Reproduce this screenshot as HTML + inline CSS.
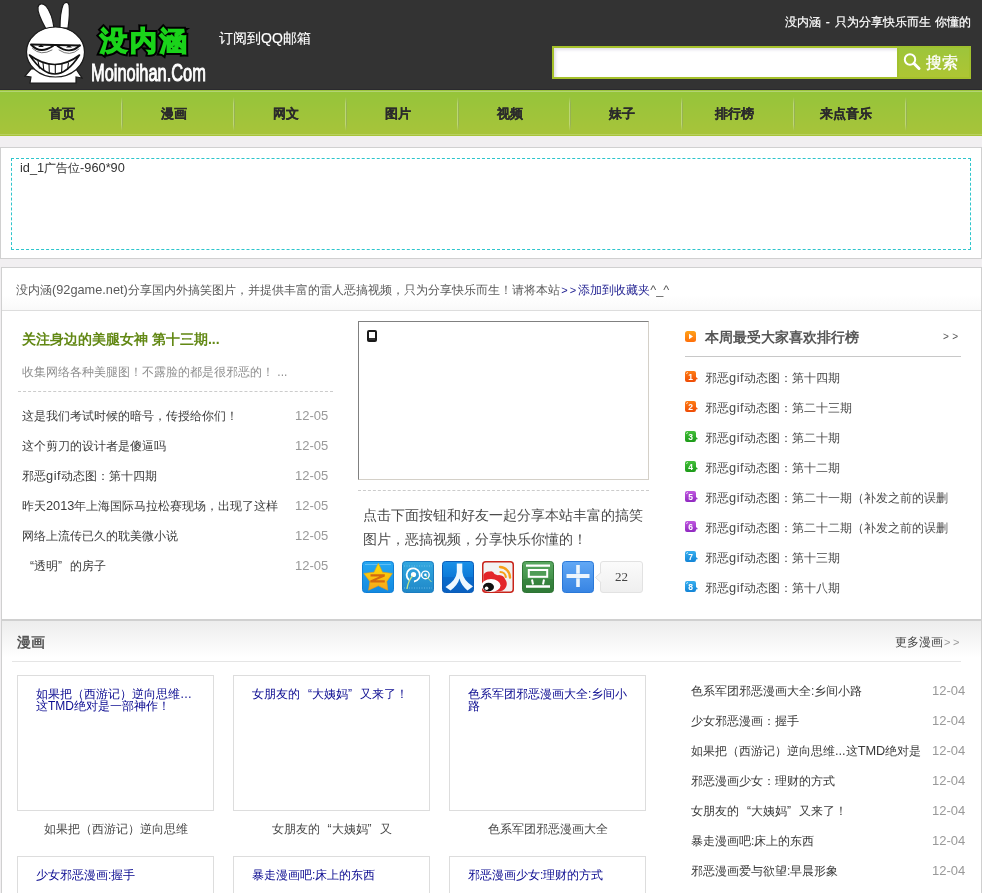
<!DOCTYPE html>
<html><head><meta charset="utf-8"><style>
*{margin:0;padding:0;box-sizing:border-box}
html,body{width:982px;height:893px;overflow:hidden;background:#f1eff1;font-family:"Liberation Sans",sans-serif;font-size:12px;color:#555}
.a{position:absolute;white-space:nowrap}
.lq{display:inline-block;width:12px;text-align:right}
.rq{display:inline-block;width:12px;text-align:left}
#top{position:absolute;left:0;top:0;width:982px;height:90px;background:#333;border-bottom:1px solid #2a292e}
#nav{position:absolute;left:0;top:90px;width:982px;height:46px;background:linear-gradient(#95c43a,#a8c43a);border-top:1px solid #9cc43f}
#nav:before{content:"";position:absolute;left:0;top:0;width:100%;height:1px;background:#b3d373}
#nav:after{content:"";position:absolute;left:0;bottom:1px;width:100%;height:1px;background:#b8d060}
.navi{position:absolute;top:15px;width:112px;text-align:center;font-weight:bold;font-size:13px;color:#2b2b2b;line-height:16px;-webkit-text-stroke:0.2px #2b2b2b}
.sep{position:absolute;top:6px;width:2px;height:34px;background:linear-gradient(rgba(255,255,255,0),rgba(255,255,255,.3) 20%,rgba(255,255,255,.3) 80%,rgba(255,255,255,0))}
.sep:after{content:"";position:absolute;left:1px;top:0;width:1px;height:100%;background:linear-gradient(rgba(80,110,20,0),rgba(80,110,20,.35) 20%,rgba(80,110,20,.35) 80%,rgba(80,110,20,0))}
.panel{position:absolute;background:#fff;border:1px solid #d0d0d0}
.clip{overflow:hidden}
</style></head><body><div style="position:absolute;left:0;top:0;width:982px;height:893px;overflow:hidden;will-change:transform">

<div id="top">
 <svg class="a" style="left:0;top:0" width="100" height="90" viewBox="0 0 100 90">
  <g stroke="#1a1a1a" stroke-width="1.2" fill="#fff">
   <path d="M46 29 C42 22 37 13 38 7 C39 3 43 3 46 6 C50 11 53 20 54 28 Z"/>
   <path d="M60 28 C60 20 61 10 63 5 C64 2 68 1 69 5 C70 12 69 21 68 28 Z"/>
   <path d="M31 69 L25 76 L31 77 L30 83 L76 83 L76 77 L82 78 L76 69 Z"/>
   <ellipse cx="55.5" cy="52" rx="29" ry="25"/>
  </g>
  <g fill="none" stroke="#111" stroke-width="1.9" stroke-linecap="round">
   <path d="M31 44.5 L80 45.5"/>
   <path d="M31.5 45 Q40 54.5 53 46"/>
   <path d="M57.5 46 Q70 55 79.5 45.5"/>
   <path d="M32.5 48.5 Q41 56.5 52 50" stroke="#666" stroke-width="0.9"/>
   <path d="M59 50 Q70 57.5 79 49" stroke="#666" stroke-width="0.9"/>
  </g>
  <path d="M41 44.5 L38 47 L44 47 Z M69 45 L66 47.5 L72 47.5 Z" fill="#111"/>
  <path d="M29.5 55 Q55 74 79.5 55 Q55 93 29.5 55 Z" fill="#fff" stroke="#111" stroke-width="1.6" stroke-linejoin="round"/>
  <g stroke="#111" stroke-width="1.1"><path d="M38 61 L39.5 68.5 M43 62.8 L43.8 70.5 M49 64 L49.3 72.5 M55.3 64.5 L55.3 74 M62 64 L61.6 72.5 M68.5 62.5 L67.5 70"/></g>
 </svg>
 <div class="a" style="left:100px;top:25px;font:bold 27px/32px 'Liberation Sans',sans-serif;color:#000;-webkit-text-stroke:5.5px #000;letter-spacing:3px">没内涵</div>
 <div class="a" style="left:100px;top:25px;font:bold 27px/32px 'Liberation Sans',sans-serif;color:#1ad31a;-webkit-text-stroke:1.6px #1ad31a;letter-spacing:3px">没内涵</div>
 <div class="a" style="left:91px;top:57px;font:22px/28px 'Liberation Sans',sans-serif;color:#fff;-webkit-text-stroke:0.9px #fff;transform:scale(0.745,1.12);transform-origin:0 0">Moinoihan.Com</div>
 <div class="a" style="left:219px;top:29px;font-size:14px;line-height:18px;color:#fff;-webkit-text-stroke:0.15px #fff">订阅到QQ邮箱</div>
 <div class="a" style="left:785px;top:13px;line-height:18px;color:#fff;word-spacing:1.5px;-webkit-text-stroke:0.2px #fff">没内涵 - 只为分享快乐而生 你懂的</div>
 <div class="a" style="left:552px;top:46px;width:345px;height:33px;border:2px solid #a6c12a;border-right:0;background:#fff;box-shadow:inset 2px 2px 3px #e2e0ea"></div>
 <div class="a" style="left:897px;top:46px;width:74px;height:33px;background:linear-gradient(#9cc53b,#afc533);box-shadow:inset 0 0 0 2px rgba(160,190,40,.6)">
  <svg class="a" style="left:0;top:0" width="74" height="33"><circle cx="13" cy="13.5" r="5.2" fill="none" stroke="#fff" stroke-width="2"/><path d="M17 17.5 L22 22.5" stroke="#fff" stroke-width="3" stroke-linecap="round"/></svg>
  <div class="a" style="left:29px;top:7px;font-size:16px;line-height:20px;color:#fff;-webkit-text-stroke:0.3px #fff">搜索</div>
 </div>
</div>
<div id="nav">
 <div class="navi" style="left:6px">首页</div>
 <div class="sep" style="left:121px"></div>
 <div class="navi" style="left:118px">漫画</div>
 <div class="sep" style="left:233px"></div>
 <div class="navi" style="left:230px">网文</div>
 <div class="sep" style="left:345px"></div>
 <div class="navi" style="left:342px">图片</div>
 <div class="sep" style="left:457px"></div>
 <div class="navi" style="left:454px">视频</div>
 <div class="sep" style="left:569px"></div>
 <div class="navi" style="left:566px">妹子</div>
 <div class="sep" style="left:681px"></div>
 <div class="navi" style="left:678px">排行榜</div>
 <div class="sep" style="left:793px"></div>
 <div class="navi" style="left:790px">来点音乐</div>
 <div class="sep" style="left:905px"></div>
</div>
<div class="panel" style="left:0;top:147px;width:982px;height:112px">
 <div class="a" style="left:10px;top:10px;width:960px;height:92px;border:1px dashed #2ec5cc"></div>
 <div class="a" style="left:19px;top:11px;line-height:18px;color:#333"><span style="font-size:12.75px">id_1</span>广告位<span style="font-size:12.75px">-960*90</span></div>
</div>
<div class="panel" style="left:1px;top:267px;width:981px;height:353px">
 <div class="a" style="left:0;top:0;width:979px;height:43px;background:linear-gradient(#fff 65%,#f9f9f9);border-bottom:1px solid #ddd"></div>
 <div class="a" style="left:14px;top:13px;line-height:18px;color:#5a5a5a">没内涵<span style="font-size:12.75px">(92game.net)</span>分享国内外搞笑图片，并提供丰富的雷人恶搞视频，只为分享快乐而生！请将本站<span style="color:#1d1d8f"><span style="font-size:11px;letter-spacing:2px;margin-left:1.5px">&gt;&gt;</span>添加到收藏夹</span><span style="font-size:12.75px">^_^</span></div>
 <div class="a" style="left:20px;top:62px;font-size:14px;font-weight:bold;line-height:18px;color:#628814">关注身边的美腿女神 第十三期...</div>
 <div class="a" style="left:20px;top:95px;line-height:18px;color:#8f8f8f">收集网络各种美腿图！不露脸的都是很邪恶的！ ...</div>
 <div class="a" style="left:16px;top:123px;width:315px;height:1px;border-top:1px dashed #ccc"></div>
 <div class="a clip" style="left:20px;top:133px;width:258px;line-height:30px;color:#3a3a3a">这是我们考试时候的暗号，传授给你们！</div><div class="a" style="left:293px;top:133px;line-height:30px;color:#999"><span style="font-size:13px">12-05</span></div>
 <div class="a clip" style="left:20px;top:163px;width:258px;line-height:30px;color:#3a3a3a">这个剪刀的设计者是傻逼吗</div><div class="a" style="left:293px;top:163px;line-height:30px;color:#999"><span style="font-size:13px">12-05</span></div>
 <div class="a clip" style="left:20px;top:193px;width:258px;line-height:30px;color:#3a3a3a">邪恶<span style="font-size:12.75px;letter-spacing:0.6px">gif</span>动态图：第十四期</div><div class="a" style="left:293px;top:193px;line-height:30px;color:#999"><span style="font-size:13px">12-05</span></div>
 <div class="a clip" style="left:20px;top:223px;width:258px;line-height:30px;color:#3a3a3a">昨天<span style="font-size:12.75px">2013</span>年上海国际马拉松赛现场，出现了这样</div><div class="a" style="left:293px;top:223px;line-height:30px;color:#999"><span style="font-size:13px">12-05</span></div>
 <div class="a clip" style="left:20px;top:253px;width:258px;line-height:30px;color:#3a3a3a">网络上流传已久的耽美微小说</div><div class="a" style="left:293px;top:253px;line-height:30px;color:#999"><span style="font-size:13px">12-05</span></div>
 <div class="a clip" style="left:20px;top:283px;width:258px;line-height:30px;color:#3a3a3a"><span class="lq">“</span>透明<span class="rq">”</span>的房子</div><div class="a" style="left:293px;top:283px;line-height:30px;color:#999"><span style="font-size:13px">12-05</span></div>
 <div class="a" style="left:356px;top:53px;width:291px;height:159px;border:1px solid;border-color:#808080 #d4d0c8 #d4d0c8 #808080;background:#fff"><div class="a" style="left:8px;top:8px;width:10px;height:12px;background:#1a1a1a;border-radius:2px"><div class="a" style="left:2px;top:2px;width:6px;height:6px;background:#fff"></div><div class="a" style="left:2px;top:8px;width:6px;height:2px;background:#333"></div></div></div>
 <div class="a" style="left:356px;top:222px;width:291px;height:1px;border-top:1px dashed #ccc"></div>
 <div class="a" style="left:361px;top:235px;width:290px;font-size:14px;line-height:24px;color:#4a4a4a;white-space:normal">点击下面按钮和好友一起分享本站丰富的搞笑图片，恶搞视频，分享快乐你懂的！</div>
 <div class="a" style="left:360px;top:293px;width:32px;height:32px"><svg width="32" height="32"><defs><linearGradient id="qz" x1="0" y1="0" x2="0" y2="1"><stop offset="0" stop-color="#26a8f2"/><stop offset="1" stop-color="#1389e0"/></linearGradient><linearGradient id="st" x1="0" y1="0" x2="0" y2="1"><stop offset="0" stop-color="#ffe100"/><stop offset="1" stop-color="#f7a41c"/></linearGradient></defs>
<rect x="0.5" y="0.5" width="31" height="31" rx="3" fill="url(#qz)" stroke="#0f7fd6"/><path d="M3 3.5 H29" stroke="#8fd3fa" stroke-width="0.8" opacity=".7"/>
<path d="M16.3 2.3 L20.5 11.2 L30.4 12.4 L24.8 20.5 L25.8 29.2 L16.3 24.8 L6.6 29.2 L7.9 20.5 L1.8 12.4 L12 11.2 Z" fill="url(#st)" stroke="#e8a010" stroke-width="0.6"/>
<path d="M8.5 13.2 H22.8 V15.4 L13.8 19.2 H22.8 V21.4 H8.3 V19.4 L17.4 15.5 H8.5 Z" fill="#d46a10"/></svg></div>
 <div class="a" style="left:400px;top:293px;width:32px;height:32px"><svg width="32" height="32"><defs><linearGradient id="tw" x1="0" y1="0" x2="0" y2="1"><stop offset="0" stop-color="#33a8e0"/><stop offset="1" stop-color="#1f88c8"/></linearGradient></defs>
<rect x="0.5" y="0.5" width="31" height="31" rx="3" fill="url(#tw)" stroke="#1a7cc0"/><path d="M2 5 H30 M2 27 H30" stroke="#7cc8ee" stroke-width="0.8" stroke-dasharray="1 1.5"/>
<path d="M7 19 A6.6 6.6 0 1 1 12 20.5" fill="none" stroke="#fff" stroke-width="1.8"/><circle cx="11.5" cy="13.5" r="2.6" fill="#fff"/>
<path d="M10.5 15 Q6 20 5 28" fill="none" stroke="#c8e88a" stroke-width="1.2"/>
<circle cx="23.4" cy="13.9" r="3.8" fill="none" stroke="#fff" stroke-width="1.4"/><circle cx="23.4" cy="13.9" r="1.3" fill="#fff"/><path d="M24 15 L29.5 21" stroke="#bfe39a" stroke-width="1"/></svg></div>
 <div class="a" style="left:440px;top:293px;width:32px;height:32px"><svg width="32" height="32"><defs><linearGradient id="rr" x1="0" y1="0" x2="0" y2="1"><stop offset="0" stop-color="#1a90e8"/><stop offset=".5" stop-color="#0d7ad8"/><stop offset=".5" stop-color="#0a6ccc"/><stop offset="1" stop-color="#0a60c0"/></linearGradient></defs>
<rect x="0.5" y="0.5" width="31" height="31" rx="3" fill="url(#rr)" stroke="#0a5cb8"/>
<path d="M14.8 2.5 H20.3 V11 Q21 19 31 25.5 L25.5 29.5 Q19 24 17.5 17.5 Q15.8 24 8.5 29.5 L3.5 26 Q14.5 19 14.8 11 Z" fill="#eef8ff"/></svg></div>
 <div class="a" style="left:480px;top:293px;width:32px;height:32px"><svg width="32" height="32"><rect x="0.75" y="0.75" width="30.5" height="30.5" rx="3" fill="#f2f2f2" stroke="#c8241a" stroke-width="1.5"/>
<path d="M1.5 14 Q3 10 8 10.5 Q11 9.5 12.5 13 Q15 14.5 17 14 Q22 14.5 23 18 Q26 22 24 26 Q22 30.5 15 30.5 L1.5 30.5 Z" fill="#e3262a"/>
<ellipse cx="9" cy="24.5" rx="9.5" ry="6.5" fill="#fff"/><ellipse cx="6.5" cy="26" rx="5.5" ry="4.3" fill="#111"/><circle cx="4.6" cy="27.2" r="1.8" fill="#fff"/>
<path d="M18 6 A10.5 10.5 0 0 1 28 16.5" fill="none" stroke="#f6a01a" stroke-width="2.4" stroke-linecap="round"/><path d="M18.5 11 A5.5 5.5 0 0 1 23.8 16" fill="none" stroke="#f6a01a" stroke-width="2.2" stroke-linecap="round"/></svg></div>
 <div class="a" style="left:520px;top:293px;width:32px;height:32px"><svg width="32" height="32"><defs><linearGradient id="db" x1="0" y1="0" x2="0" y2="1"><stop offset="0" stop-color="#5aa862"/><stop offset=".55" stop-color="#43924a"/><stop offset=".55" stop-color="#3a8641"/><stop offset="1" stop-color="#2f7a36"/></linearGradient></defs>
<rect x="0.5" y="0.5" width="31" height="31" rx="3" fill="url(#db)" stroke="#2e7434"/>
<path d="M4 3.5 H28 V5.8 H4 Z M4 24.2 H28 V26.8 H4 Z" fill="#fff"/><rect x="6.8" y="9" width="18.4" height="6.8" fill="#4f9c56" stroke="#fff" stroke-width="2"/>
<path d="M10 18.5 L11 23.5 M22 18.5 L21 23.5" stroke="#fff" stroke-width="2"/></svg></div>
 <div class="a" style="left:560px;top:293px;width:32px;height:32px"><svg width="32" height="32"><defs><linearGradient id="pl" x1="0" y1="0" x2="0" y2="1"><stop offset="0" stop-color="#62a8f5"/><stop offset="1" stop-color="#3784e3"/></linearGradient></defs>
<rect x="0.5" y="0.5" width="31" height="31" rx="3" fill="url(#pl)" stroke="#2a78d8"/>
<path d="M14.2 4 H17.8 V12.8 H14.2 Z M14.2 17.2 H17.8 V26 H14.2 Z M4.5 13 H27.5 V17 H4.5 Z" fill="#eef5fc"/></svg></div>
 <div class="a" style="left:598px;top:293px;width:43px;height:32px;background:linear-gradient(#fbfbfb,#efefef);border:1px solid #e2e2e2;border-radius:3px;font:13px/30px 'Liberation Serif',serif;color:#444;text-align:center">22<svg class="a" style="left:-6px;top:10px" width="7" height="11"><path d="M6.5 0 L0.5 5.5 L6.5 11" fill="#f6f6f6" stroke="#e2e2e2"/></svg></div>
 <svg class="a" style="left:683px;top:63px" width="12" height="12"><defs><linearGradient id="og" x1="0" y1="0" x2="0" y2="1"><stop offset="0" stop-color="#ffa21a"/><stop offset="1" stop-color="#ff6f0a"/></linearGradient></defs><rect x="0" y="0" width="11" height="11" rx="2.5" fill="url(#og)"/><path d="M4 2.8 L8 5.5 L4 8.2 Z" fill="#fff"/></svg>
 <div class="a" style="left:703px;top:60px;font-size:14px;font-weight:bold;line-height:18px;color:#555">本周最受大家喜欢排行榜</div>
 <div class="a" style="left:941px;top:62px;font-size:10px;line-height:14px;color:#555;letter-spacing:3.5px">&gt;&gt;</div>
 <div class="a" style="left:683px;top:88px;width:276px;height:1px;background:#c8c8c8"></div>
 <svg class="a" style="left:683px;top:103px" width="14" height="12"><defs><linearGradient id="g0" x1="0" y1="0" x2="0" y2="1"><stop offset="0" stop-color="#ff7d14"/><stop offset="1" stop-color="#ee4c06"/></linearGradient></defs><path d="M2 0 H9 Q11 0 11 2 V6 L13 8 L11 8.5 V9 Q11 11 9 11 H2 Q0 11 0 9 V2 Q0 0 2 0 Z" fill="url(#g0)"/><path d="M1.5 3 Q1.5 1.5 3 1.5" stroke="#fff" stroke-width="0.8" fill="none" opacity=".8"/><text x="5.5" y="9" font-size="8.5" font-weight="bold" text-anchor="middle" fill="#fff" font-family="Liberation Sans">1</text></svg><div class="a clip" style="left:703px;top:95px;width:244px;line-height:30px;color:#484848">邪恶<span style="font-size:12.75px;letter-spacing:0.6px">gif</span>动态图：第十四期</div>
 <svg class="a" style="left:683px;top:133px" width="14" height="12"><defs><linearGradient id="g1" x1="0" y1="0" x2="0" y2="1"><stop offset="0" stop-color="#ff7d14"/><stop offset="1" stop-color="#ee4c06"/></linearGradient></defs><path d="M2 0 H9 Q11 0 11 2 V6 L13 8 L11 8.5 V9 Q11 11 9 11 H2 Q0 11 0 9 V2 Q0 0 2 0 Z" fill="url(#g1)"/><path d="M1.5 3 Q1.5 1.5 3 1.5" stroke="#fff" stroke-width="0.8" fill="none" opacity=".8"/><text x="5.5" y="9" font-size="8.5" font-weight="bold" text-anchor="middle" fill="#fff" font-family="Liberation Sans">2</text></svg><div class="a clip" style="left:703px;top:125px;width:244px;line-height:30px;color:#484848">邪恶<span style="font-size:12.75px;letter-spacing:0.6px">gif</span>动态图：第二十三期</div>
 <svg class="a" style="left:683px;top:163px" width="14" height="12"><defs><linearGradient id="g2" x1="0" y1="0" x2="0" y2="1"><stop offset="0" stop-color="#44c03a"/><stop offset="1" stop-color="#1c9a18"/></linearGradient></defs><path d="M2 0 H9 Q11 0 11 2 V6 L13 8 L11 8.5 V9 Q11 11 9 11 H2 Q0 11 0 9 V2 Q0 0 2 0 Z" fill="url(#g2)"/><path d="M1.5 3 Q1.5 1.5 3 1.5" stroke="#fff" stroke-width="0.8" fill="none" opacity=".8"/><text x="5.5" y="9" font-size="8.5" font-weight="bold" text-anchor="middle" fill="#fff" font-family="Liberation Sans">3</text></svg><div class="a clip" style="left:703px;top:155px;width:244px;line-height:30px;color:#484848">邪恶<span style="font-size:12.75px;letter-spacing:0.6px">gif</span>动态图：第二十期</div>
 <svg class="a" style="left:683px;top:193px" width="14" height="12"><defs><linearGradient id="g3" x1="0" y1="0" x2="0" y2="1"><stop offset="0" stop-color="#44c03a"/><stop offset="1" stop-color="#1c9a18"/></linearGradient></defs><path d="M2 0 H9 Q11 0 11 2 V6 L13 8 L11 8.5 V9 Q11 11 9 11 H2 Q0 11 0 9 V2 Q0 0 2 0 Z" fill="url(#g3)"/><path d="M1.5 3 Q1.5 1.5 3 1.5" stroke="#fff" stroke-width="0.8" fill="none" opacity=".8"/><text x="5.5" y="9" font-size="8.5" font-weight="bold" text-anchor="middle" fill="#fff" font-family="Liberation Sans">4</text></svg><div class="a clip" style="left:703px;top:185px;width:244px;line-height:30px;color:#484848">邪恶<span style="font-size:12.75px;letter-spacing:0.6px">gif</span>动态图：第十二期</div>
 <svg class="a" style="left:683px;top:223px" width="14" height="12"><defs><linearGradient id="g4" x1="0" y1="0" x2="0" y2="1"><stop offset="0" stop-color="#c058e0"/><stop offset="1" stop-color="#9028c0"/></linearGradient></defs><path d="M2 0 H9 Q11 0 11 2 V6 L13 8 L11 8.5 V9 Q11 11 9 11 H2 Q0 11 0 9 V2 Q0 0 2 0 Z" fill="url(#g4)"/><path d="M1.5 3 Q1.5 1.5 3 1.5" stroke="#fff" stroke-width="0.8" fill="none" opacity=".8"/><text x="5.5" y="9" font-size="8.5" font-weight="bold" text-anchor="middle" fill="#fff" font-family="Liberation Sans">5</text></svg><div class="a clip" style="left:703px;top:215px;width:244px;line-height:30px;color:#484848">邪恶<span style="font-size:12.75px;letter-spacing:0.6px">gif</span>动态图：第二十一期（补发之前的误删</div>
 <svg class="a" style="left:683px;top:253px" width="14" height="12"><defs><linearGradient id="g5" x1="0" y1="0" x2="0" y2="1"><stop offset="0" stop-color="#c058e0"/><stop offset="1" stop-color="#9028c0"/></linearGradient></defs><path d="M2 0 H9 Q11 0 11 2 V6 L13 8 L11 8.5 V9 Q11 11 9 11 H2 Q0 11 0 9 V2 Q0 0 2 0 Z" fill="url(#g5)"/><path d="M1.5 3 Q1.5 1.5 3 1.5" stroke="#fff" stroke-width="0.8" fill="none" opacity=".8"/><text x="5.5" y="9" font-size="8.5" font-weight="bold" text-anchor="middle" fill="#fff" font-family="Liberation Sans">6</text></svg><div class="a clip" style="left:703px;top:245px;width:244px;line-height:30px;color:#484848">邪恶<span style="font-size:12.75px;letter-spacing:0.6px">gif</span>动态图：第二十二期（补发之前的误删</div>
 <svg class="a" style="left:683px;top:283px" width="14" height="12"><defs><linearGradient id="g6" x1="0" y1="0" x2="0" y2="1"><stop offset="0" stop-color="#38b0f0"/><stop offset="1" stop-color="#1284d6"/></linearGradient></defs><path d="M2 0 H9 Q11 0 11 2 V6 L13 8 L11 8.5 V9 Q11 11 9 11 H2 Q0 11 0 9 V2 Q0 0 2 0 Z" fill="url(#g6)"/><path d="M1.5 3 Q1.5 1.5 3 1.5" stroke="#fff" stroke-width="0.8" fill="none" opacity=".8"/><text x="5.5" y="9" font-size="8.5" font-weight="bold" text-anchor="middle" fill="#fff" font-family="Liberation Sans">7</text></svg><div class="a clip" style="left:703px;top:275px;width:244px;line-height:30px;color:#484848">邪恶<span style="font-size:12.75px;letter-spacing:0.6px">gif</span>动态图：第十三期</div>
 <svg class="a" style="left:683px;top:313px" width="14" height="12"><defs><linearGradient id="g7" x1="0" y1="0" x2="0" y2="1"><stop offset="0" stop-color="#38b0f0"/><stop offset="1" stop-color="#1284d6"/></linearGradient></defs><path d="M2 0 H9 Q11 0 11 2 V6 L13 8 L11 8.5 V9 Q11 11 9 11 H2 Q0 11 0 9 V2 Q0 0 2 0 Z" fill="url(#g7)"/><path d="M1.5 3 Q1.5 1.5 3 1.5" stroke="#fff" stroke-width="0.8" fill="none" opacity=".8"/><text x="5.5" y="9" font-size="8.5" font-weight="bold" text-anchor="middle" fill="#fff" font-family="Liberation Sans">8</text></svg><div class="a clip" style="left:703px;top:305px;width:244px;line-height:30px;color:#484848">邪恶<span style="font-size:12.75px;letter-spacing:0.6px">gif</span>动态图：第十八期</div>
</div>
<div class="panel" style="left:1px;top:620px;width:981px;height:300px">
 <div class="a" style="left:0;top:0;width:979px;height:36px;background:linear-gradient(#ededed,#fff)"></div>
 <div class="a" style="left:15px;top:12px;font-size:14px;font-weight:bold;line-height:18px;color:#555">漫画</div>
 <div class="a" style="left:893px;top:12px;line-height:18px;color:#444">更多漫画<span style="font-size:11px;color:#999;letter-spacing:2.5px;margin-left:1px">&gt;&gt;</span></div>
 <div class="a" style="left:10px;top:40px;width:949px;height:1px;background:#e5e5e5"></div>
 <div class="a" style="left:15px;top:54px;width:197px;height:136px;border:1px solid #ddd;background:#fff"><div class="a" style="left:18px;top:12px;width:160px;white-space:normal;font-size:12px;line-height:12px;color:#0a0a90">如果把（西游记）逆向思维…这TMD绝对是一部神作！</div></div><div class="a" style="left:15px;top:199px;width:197px;text-align:center;line-height:18px;color:#484848">如果把（西游记）逆向思维</div>
 <div class="a" style="left:231px;top:54px;width:197px;height:136px;border:1px solid #ddd;background:#fff"><div class="a" style="left:18px;top:12px;width:160px;white-space:normal;font-size:12px;line-height:12px;color:#0a0a90">女朋友的<span class=lq>“</span>大姨妈<span class=rq>”</span>又来了！</div></div><div class="a" style="left:231px;top:199px;width:197px;text-align:center;line-height:18px;color:#484848">女朋友的<span class="lq">“</span>大姨妈<span class="rq">”</span>又</div>
 <div class="a" style="left:447px;top:54px;width:197px;height:136px;border:1px solid #ddd;background:#fff"><div class="a" style="left:18px;top:12px;width:160px;white-space:normal;font-size:12px;line-height:12px;color:#0a0a90">色系军团邪恶漫画大全:乡间小路</div></div><div class="a" style="left:447px;top:199px;width:197px;text-align:center;line-height:18px;color:#484848">色系军团邪恶漫画大全</div>
 <div class="a" style="left:15px;top:235px;width:197px;height:136px;border:1px solid #ddd;background:#fff"><div class="a" style="left:18px;top:12px;width:160px;white-space:normal;font-size:12px;line-height:12px;color:#0a0a90">少女邪恶漫画:握手</div></div>
 <div class="a" style="left:231px;top:235px;width:197px;height:136px;border:1px solid #ddd;background:#fff"><div class="a" style="left:18px;top:12px;width:160px;white-space:normal;font-size:12px;line-height:12px;color:#0a0a90">暴走漫画吧:床上的东西</div></div>
 <div class="a" style="left:447px;top:235px;width:197px;height:136px;border:1px solid #ddd;background:#fff"><div class="a" style="left:18px;top:12px;width:160px;white-space:normal;font-size:12px;line-height:12px;color:#0a0a90">邪恶漫画少女:理财的方式</div></div>
 <div class="a clip" style="left:689px;top:55px;width:230px;line-height:30px;color:#3a3a3a">色系军团邪恶漫画大全:乡间小路</div><div class="a" style="left:930px;top:55px;line-height:30px;color:#999"><span style="font-size:13px">12-04</span></div>
 <div class="a clip" style="left:689px;top:85px;width:230px;line-height:30px;color:#3a3a3a">少女邪恶漫画：握手</div><div class="a" style="left:930px;top:85px;line-height:30px;color:#999"><span style="font-size:13px">12-04</span></div>
 <div class="a clip" style="left:689px;top:115px;width:230px;line-height:30px;color:#3a3a3a">如果把（西游记）逆向思维<span style="font-size:12.75px">...</span>这<span style="font-size:12.75px">TMD</span>绝对是</div><div class="a" style="left:930px;top:115px;line-height:30px;color:#999"><span style="font-size:13px">12-04</span></div>
 <div class="a clip" style="left:689px;top:145px;width:230px;line-height:30px;color:#3a3a3a">邪恶漫画少女：理财的方式</div><div class="a" style="left:930px;top:145px;line-height:30px;color:#999"><span style="font-size:13px">12-04</span></div>
 <div class="a clip" style="left:689px;top:175px;width:230px;line-height:30px;color:#3a3a3a">女朋友的<span class="lq">“</span>大姨妈<span class="rq">”</span>又来了！</div><div class="a" style="left:930px;top:175px;line-height:30px;color:#999"><span style="font-size:13px">12-04</span></div>
 <div class="a clip" style="left:689px;top:205px;width:230px;line-height:30px;color:#3a3a3a">暴走漫画吧:床上的东西</div><div class="a" style="left:930px;top:205px;line-height:30px;color:#999"><span style="font-size:13px">12-04</span></div>
 <div class="a clip" style="left:689px;top:235px;width:230px;line-height:30px;color:#3a3a3a">邪恶漫画爱与欲望:早晨形象</div><div class="a" style="left:930px;top:235px;line-height:30px;color:#999"><span style="font-size:13px">12-04</span></div>
</div>
</div></body></html>
